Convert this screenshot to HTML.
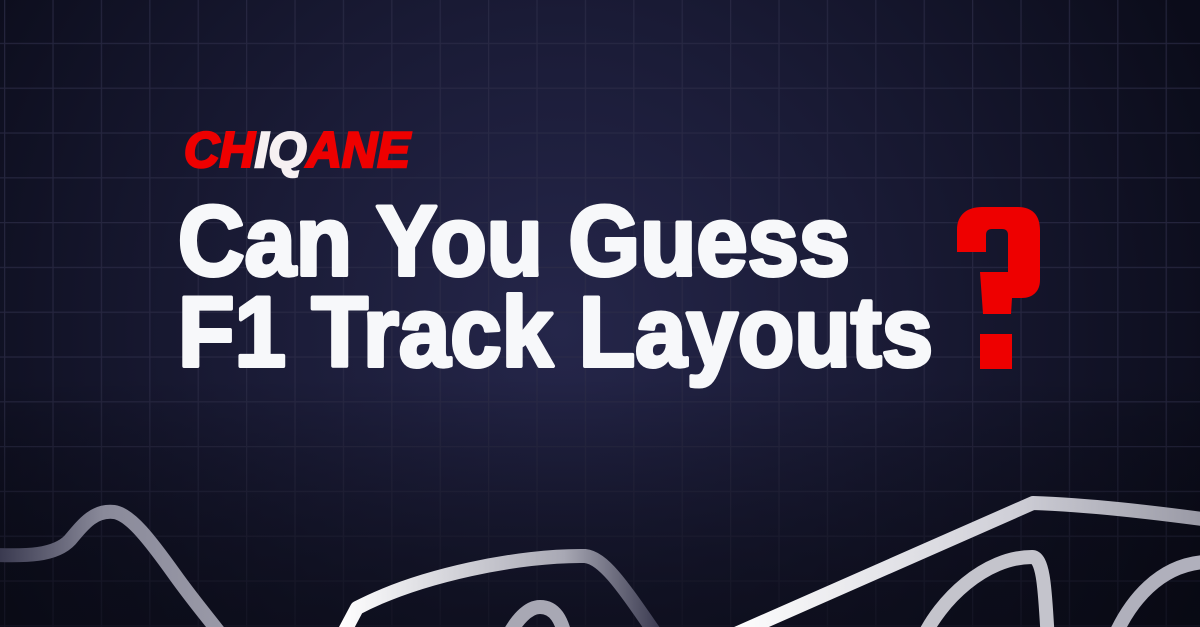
<!DOCTYPE html>
<html><head><meta charset="utf-8"><style>
html,body{margin:0;padding:0;width:1200px;height:627px;overflow:hidden;background:#12132a}
</style></head><body>
<svg width="1200" height="627" viewBox="0 0 1200 627" xmlns="http://www.w3.org/2000/svg">
<defs>
<radialGradient id="bg" cx="560" cy="330" r="700" gradientUnits="userSpaceOnUse">
<stop offset="0" stop-color="#25264a"/><stop offset="0.45" stop-color="#1a1b36"/><stop offset="1" stop-color="#0b0c1a"/>
</radialGradient>
<pattern id="grid" width="48.4" height="44.8" patternUnits="userSpaceOnUse" x="4" y="-2">
<path d="M0 0H48.4M0 0V44.8" stroke="#2d2d48" stroke-width="2.5" fill="none"/>
</pattern>
<linearGradient id="fadeB" x1="0" y1="0" x2="0" y2="627" gradientUnits="userSpaceOnUse">
<stop offset="0.6" stop-color="#000" stop-opacity="0"/><stop offset="1" stop-color="#070810" stop-opacity="0.6"/>
</linearGradient>
<linearGradient id="t1" x1="0" y1="0" x2="230" y2="0" gradientUnits="userSpaceOnUse">
<stop offset="0" stop-color="#3a3a50"/><stop offset="0.45" stop-color="#8a8a9a"/><stop offset="1" stop-color="#9a9aa8"/>
</linearGradient>
<linearGradient id="t2" x1="340" y1="0" x2="660" y2="0" gradientUnits="userSpaceOnUse">
<stop offset="0" stop-color="#ffffff"/><stop offset="0.7" stop-color="#a8a8b4"/><stop offset="1" stop-color="#3a3a50"/>
</linearGradient>
<linearGradient id="t3" x1="720" y1="0" x2="1200" y2="0" gradientUnits="userSpaceOnUse">
<stop offset="0" stop-color="#ffffff"/><stop offset="0.6" stop-color="#d0d0d8"/><stop offset="1" stop-color="#9a9aa6"/>
</linearGradient>
</defs>
<rect width="1200" height="627" fill="url(#bg)"/>
<rect width="1200" height="627" fill="url(#grid)" opacity="0.7"/>
<rect width="1200" height="627" fill="url(#fadeB)"/>
<g fill="none" stroke-width="14" stroke-linejoin="round">
<path d="M-5 555 C25 556 55 556 70 540 C85 522 95 510 114 512 C130 514 150 540 175 575 C195 603 210 620 225 640" stroke="url(#t1)"/>
<path d="M340 640 L357 608 C420 575 520 555 585 556 C605 558 625 590 660 640" stroke="url(#t2)"/>
<path d="M506 640 C516 620 528 607 540 607 C555 607 562 620 566 640" stroke="#a8a8b4"/>
<path d="M722 640 L1033 503 C1090 505 1150 512 1210 520" stroke="url(#t3)"/>
<path d="M922 640 C940 600 985 557 1032 557 C1045 557 1045 600 1048 640" stroke="#c4c4cc"/>
<path d="M1113 640 C1130 600 1160 565 1205 562" stroke="#b0b0bc"/>
</g>
<text x="184" y="167" font-family="Liberation Sans, sans-serif" font-weight="bold" font-style="italic" font-size="50" textLength="226" lengthAdjust="spacingAndGlyphs" fill="#ee0000" stroke="#ee0000" stroke-width="2.5"><tspan>CH</tspan><tspan fill="#f6f0f2" stroke="#f6f0f2">IQ</tspan><tspan>ANE</tspan></text>
<g font-family="Liberation Sans, sans-serif" font-weight="bold" font-size="99" fill="#f7f8fa" stroke="#f7f8fa" stroke-width="4" stroke-linejoin="round">
<text x="178" y="275" textLength="672" lengthAdjust="spacingAndGlyphs">Can You Guess</text>
<text x="178" y="366" textLength="755" lengthAdjust="spacingAndGlyphs">F1 Track Layouts</text>
</g>
<path d="M957 252 L957 230 C957 214 968 207 982 207 L1018 207 C1032 207 1040 215 1040 230 L1040 280 C1040 292 1032 298 1022 298 L1012 298 L1011 314 L983 314 L980 272 L1008 272 L1008 235 C1008 231 1006 229 1002 229 L992 229 C988 229 986 231 986 235 L986 252 Z" fill="#ee0000"/>
<rect x="980" y="334" width="32" height="35" fill="#ee0000"/>
</svg>
</body></html>
